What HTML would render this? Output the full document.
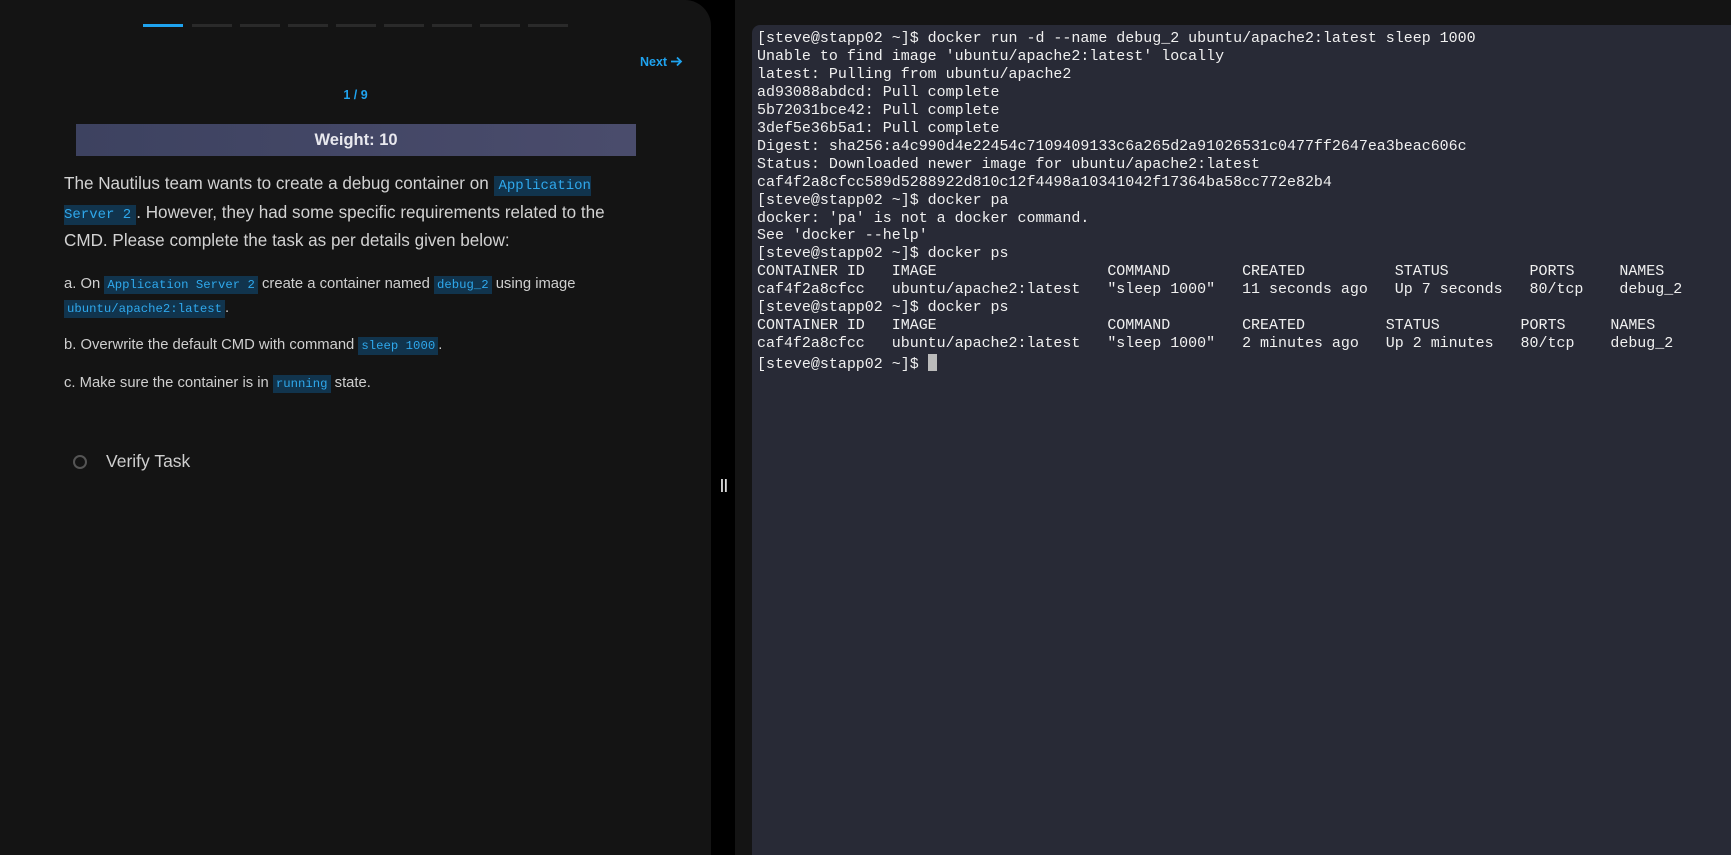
<!DOCTYPE html>
<html><head><meta charset="utf-8"><style>
*{margin:0;padding:0;box-sizing:border-box}
body{width:1731px;height:855px;background:#000;position:relative;overflow:hidden;font-family:"Liberation Sans",sans-serif}
#left{position:absolute;left:0;top:0;width:711px;height:855px;background:#141414;border-top-right-radius:26px}
.seg{position:absolute;top:24px;width:40px;height:3px;background:#2a2a2a}
#next{position:absolute;left:640px;top:55px;color:#1fa3ef;font-size:12.5px;font-weight:bold}
#next svg{vertical-align:-2px;margin-left:3px}
#cnt{position:absolute;left:0;width:711px;top:88px;text-align:center;color:#1fa3ef;font-size:12.5px;font-weight:bold}
#weight{position:absolute;left:76px;top:124px;width:560px;height:32px;background:linear-gradient(90deg,#3d4260,#4a4c6c);color:#e8e8ee;font-weight:bold;font-size:16.5px;text-align:center;line-height:32px}
#para{position:absolute;left:64px;top:171px;width:560px;color:#d2d2d2;font-size:17.1px;line-height:26.5px}
code{font-family:"Liberation Mono",monospace;background:#11344d;color:#2fa8ec;padding:2px 5px;font-size:14px}
.it{position:absolute;left:64px;color:#cfcfcf;font-size:14.8px;line-height:23px;width:600px}
.it code{font-size:12.3px;padding:2px 3px}
#circ{position:absolute;left:73px;top:455px;width:14px;height:14px;border-radius:50%;border:2.5px solid #555}
#vt{position:absolute;left:106px;top:451px;color:#cfcfcf;font-size:17.5px}
#strip{position:absolute;left:735px;top:0;width:996px;height:855px;background:#141414}
#div{position:absolute;left:720px;top:476px;color:#ddd;font-size:14px;font-weight:bold}
#term{position:absolute;left:752px;top:25px;width:979px;height:830px;background:#282a36;border-top-left-radius:8px;padding:6px 0 0 5px}
pre{font-family:"Liberation Mono",monospace;font-size:14.98px;line-height:17.95px;color:#f0f0f0}
.cur{display:inline-block;width:9px;height:17px;background:#bbb;vertical-align:-3px}
</style></head><body>
<div id="left">
<div class="seg" style="left:143px;background:#1fa3ef"></div>
<div class="seg" style="left:192px"></div>
<div class="seg" style="left:240px"></div>
<div class="seg" style="left:288px"></div>
<div class="seg" style="left:336px"></div>
<div class="seg" style="left:384px"></div>
<div class="seg" style="left:432px"></div>
<div class="seg" style="left:480px"></div>
<div class="seg" style="left:528px"></div>
<div id="next">Next<svg width="13" height="13" viewBox="0 0 13 13"><path d="M1 6.5H11M7 2.5L11 6.5L7 10.5" stroke="#1fa3ef" stroke-width="1.8" fill="none"/></svg></div>
<div id="cnt">1 / 9</div>
<div id="weight">Weight: 10</div>
<div id="para">The Nautilus team wants to create a debug container on <code>Application Server 2</code>. However, they had some specific requirements related to the CMD. Please complete the task as per details given below:</div>
<div class="it" style="top:273px">a. On <code>Application Server 2</code> create a container named <code>debug_2</code> using image<br><code>ubuntu/apache2:latest</code>.</div>
<div class="it" style="top:334px">b. Overwrite the default CMD with command <code>sleep 1000</code>.</div>
<div class="it" style="top:372px">c. Make sure the container is in <code>running</code> state.</div>
<div id="circ"></div>
<div id="vt">Verify Task</div>
</div>
<div id="div">||</div>
<div id="strip"></div>
<div id="term"><pre>[steve@stapp02 ~]$ docker run -d --name debug_2 ubuntu/apache2:latest sleep 1000
Unable to find image 'ubuntu/apache2:latest' locally
latest: Pulling from ubuntu/apache2
ad93088abdcd: Pull complete
5b72031bce42: Pull complete
3def5e36b5a1: Pull complete
Digest: sha256:a4c990d4e22454c7109409133c6a265d2a91026531c0477ff2647ea3beac606c
Status: Downloaded newer image for ubuntu/apache2:latest
caf4f2a8cfcc589d5288922d810c12f4498a10341042f17364ba58cc772e82b4
[steve@stapp02 ~]$ docker pa
docker: 'pa' is not a docker command.
See 'docker --help'
[steve@stapp02 ~]$ docker ps
CONTAINER ID   IMAGE                   COMMAND        CREATED          STATUS         PORTS     NAMES
caf4f2a8cfcc   ubuntu/apache2:latest   "sleep 1000"   11 seconds ago   Up 7 seconds   80/tcp    debug_2
[steve@stapp02 ~]$ docker ps
CONTAINER ID   IMAGE                   COMMAND        CREATED         STATUS         PORTS     NAMES
caf4f2a8cfcc   ubuntu/apache2:latest   "sleep 1000"   2 minutes ago   Up 2 minutes   80/tcp    debug_2
[steve@stapp02 ~]$ <span class="cur"></span></pre></div>
</body></html>
